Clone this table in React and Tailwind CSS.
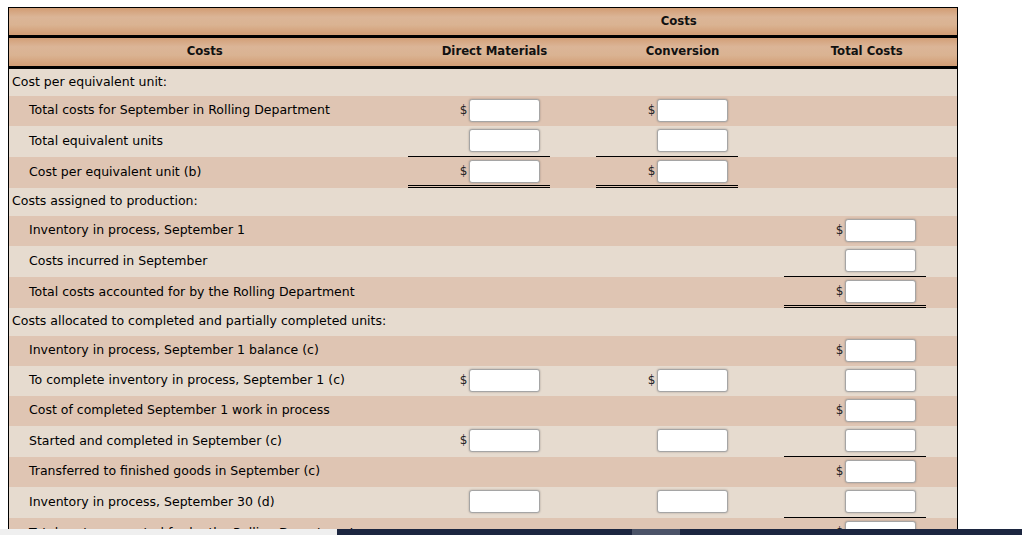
const rows = [
  { label: 'Cost per equivalent unit:', section: true },
  { label: 'Total costs for September in Rolling Department', dm: { d: true }, cv: { d: true } },
  { label: 'Total equivalent units', dm: { line: 'single' }, cv: { line: 'single' } },
  { label: 'Cost per equivalent unit (b)', dm: { d: true, line: 'double' }, cv: { d: true, line: 'double' } },
  { label: 'Costs assigned to production:', section: true },
  { label: 'Inventory in process, September 1', tc: { d: true } },
  { label: 'Costs incurred in September', tc: { line: 'single' } },
  { label: 'Total costs accounted for by the Rolling Department', tc: { d: true, line: 'double' } },
  { label: 'Costs allocated to completed and partially completed units:', section: true },
  { label: 'Inventory in process, September 1 balance (c)', tc: { d: true } },
  { label: 'To complete inventory in process, September 1 (c)', dm: { d: true }, cv: { d: true }, tc: {} },
  { label: 'Cost of completed September 1 work in process', tc: { d: true } },
  { label: 'Started and completed in September (c)', dm: { d: true }, cv: {}, tc: { line: 'single' } },
  { label: 'Transferred to finished goods in September (c)', tc: { d: true } },
  { label: 'Inventory in process, September 30 (d)', dm: {}, cv: {}, tc: { line: 'single' } },
  { label: 'Total costs accounted for by the Rolling Department', tc: { d: true, line: 'double' } },
]

const lineCls = {
  none: 'pb-[4px]',
  single: 'pb-[4px] border-b border-black',
  double: 'pb-[2px] border-b-[3px] border-double border-black',
}

const headBg = 'bg-[linear-gradient(to_bottom,#d29d74,#dbb597_35%,#dab392_65%,#d29e76)]'

function AmountCell({ cell }) {
  // no cell -> empty column
  if (!cell) return <td className="p-0" />
  return (
    <td className="p-0 align-top">
      <div className={`ml-[7px] w-[142px] pt-[3px] pr-[10px] flex justify-end items-center ${lineCls[cell.line || 'none']}`}>
        {cell.d && <span className="text-[12px] mr-[1px] text-[#222]">$</span>}
        <input
          type="text"
          className="w-[71px] h-[23px] bg-white border border-[#a5a5a5] rounded-[3px] shadow-[0_0_2px_rgba(0,0,0,0.3)] outline-none"
        />
      </div>
    </td>
  )
}

export default function App() {
  return (
    <div className="min-h-screen bg-white font-['DejaVu_Sans',Verdana,sans-serif] text-black">
      <div className="pl-[8px] pt-[7px]">
        <table className="w-[949px] table-fixed border-collapse border border-black text-[12.5px]">
          <colgroup>
            <col className="w-[392px]" />
            <col className="w-[188px]" />
            <col className="w-[188px]" />
            <col className="w-[181px]" />
          </colgroup>
          <thead>
            <tr className={`h-[29px] ${headBg} border-b-[3px] border-black`}>
              <th />
              <th colSpan="3" className="text-[11.7px] font-bold text-[#111] text-center">Costs</th>
            </tr>
            <tr className={`h-[31px] ${headBg} border-b-[3px] border-black`}>
              <th className="text-[11.7px] font-bold text-[#111] text-center">Costs</th>
              <th className="text-[11.7px] font-bold text-[#111] text-center">Direct Materials</th>
              <th className="text-[11.7px] font-bold text-[#111] text-center">Conversion</th>
              <th className="text-[11.7px] font-bold text-[#111] text-center">Total Costs</th>
            </tr>
          </thead>
          <tbody>
            {rows.map((r, i) => (
              <tr key={i} className={i % 2 === 0 ? 'bg-[#e6dbcf]' : 'bg-[#dfc5b3]'}>
                {r.section ? (
                  <>
                    <td className="h-[28px] pl-[3px] align-middle">{r.label}</td>
                    <td />
                    <td />
                    <td />
                  </>
                ) : (
                  <>
                    <td className="pl-[20px] align-middle">{r.label}</td>
                    <AmountCell cell={r.dm} />
                    <AmountCell cell={r.cv} />
                    <AmountCell cell={r.tc} />
                  </>
                )}
              </tr>
            ))}
          </tbody>
        </table>
      </div>
      <div className="fixed bottom-0 left-0 right-0 h-[6px] flex">
        <div className="w-[337px] bg-[#efefef]" />
        <div className="flex-1 bg-[#1c2640] flex">
          <div className="ml-[295px] w-[48px] bg-[#4b5368]" />
        </div>
      </div>
    </div>
  )
}
